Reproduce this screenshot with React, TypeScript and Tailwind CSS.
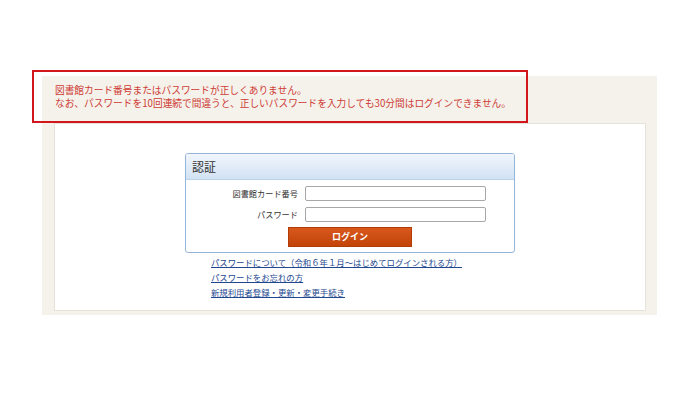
const jp = { fontFamily: '"Noto Sans CJK JP", "Noto Sans", sans-serif' };

const links = [
  "パスワードについて（令和６年１月～はじめてログインされる方）",
  "パスワードをお忘れの方",
  "新規利用者登録・更新・変更手続き",
];

export default function App() {
  return (
    <div className="min-h-[394px] w-[700px] bg-white" style={jp}>
      <div className="h-[76px]" />
      <div className="ml-[42px] flow-root w-[615px] bg-[#f4f2eb] pb-[4px] pl-[12px] pr-[11px]">
        {/* error message */}
        <div className="-ml-[22px] -mt-[6px] h-[53px] w-[496px] border-2 border-[#d3151c] pl-[21px] pt-[12px] text-[9.7px] leading-[12.5px] text-[#cf3b35]">
          <p>図書館カード番号またはパスワードが正しくありません。</p>
          <p>なお、パスワードを10回連続で間違うと、正しいパスワードを入力しても30分間はログインできません。</p>
        </div>

        <div className="flex h-[188px] flex-col items-center border border-[#e6e4da] bg-white pt-[29px]">
          <div className="w-[330px]">
            <div className="overflow-hidden rounded-[3px] border border-[#96b5d8] bg-white">
              <div className="flex h-[26px] items-center border-b border-[#bcd1ea] bg-gradient-to-b from-[#f1f6fc] to-[#d2e2f4] pl-[6px] text-[12px] text-[#333]">
                認証
              </div>
              <div className="flex flex-col items-center pb-[5px] pt-[6px]">
                <div className="grid grid-cols-[112px_181px] items-center gap-x-[7px] gap-y-[6px] self-start text-[8.2px] text-[#333]">
                  <label className="text-right">図書館カード番号</label>
                  <input className="h-[15px] rounded-[2px] border border-[#a7a7a7] bg-white outline-none" />
                  <label className="text-right">パスワード</label>
                  <input type="password" className="h-[15px] rounded-[2px] border border-[#a7a7a7] bg-white outline-none" />
                </div>
                <button className="mt-[5px] h-[20px] w-[124px] border border-[#b33c06] bg-gradient-to-b from-[#d8581c] to-[#c24408] text-[9px] font-bold text-white">
                  ログイン
                </button>
              </div>
            </div>
            <ul className="mt-[2px] pl-[26px] text-[8.4px] leading-[15px] text-[#23478f]">
              {links.map((t) => (
                <li key={t}>
                  <a href="#" className="underline underline-offset-[1px]">
                    {t}
                  </a>
                </li>
              ))}
            </ul>
          </div>
        </div>
      </div>
    </div>
  );
}
